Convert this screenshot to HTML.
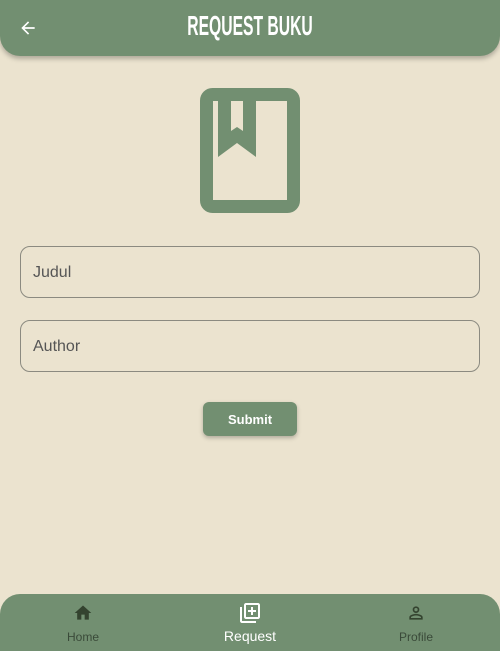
<!DOCTYPE html>
<html><head><style>
body{margin:0;width:500px;height:651px;background:#ebe3cf;font-family:"Liberation Sans",sans-serif;position:relative;overflow:hidden}
.hdr{position:absolute;left:0;top:0;width:500px;height:56px;background:#728f71;border-radius:0 0 20px 20px;box-shadow:0 3px 5px rgba(0,0,0,.25)}
.hdr .t{position:absolute;left:0;right:0;top:10px;text-align:center;color:#fff;font:bold 28px "Liberation Sans Narrow","Liberation Sans",sans-serif;transform:scaleX(.56);letter-spacing:0}
.f{position:absolute;left:20px;width:460px;height:52px;border:1px solid #8b8a80;border-radius:10px;box-sizing:border-box}
.f span{position:absolute;left:12px;top:17px;font-size:16px;color:#555}
.btn{position:absolute;left:203px;top:402px;width:94px;height:34px;background:#728f71;border-radius:6px;color:#fff;font-weight:bold;font-size:13px;text-align:center;line-height:35px;box-shadow:0 2px 4px rgba(0,0,0,.25)}
.nav{position:absolute;left:0;top:594px;width:500px;height:57px;background:#728f71;border-radius:20px 20px 0 0}
.nav div{position:absolute;font-size:12px;color:#3a4a39;text-align:center;width:100px}
</style></head><body>
<div class="hdr">
<svg style="position:absolute;left:18px;top:18px" width="20" height="20" viewBox="0 0 24 24"><path d="M20 11H7.8l5.6-5.6L12 4l-8 8 8 8 1.4-1.4L7.8 13H20z" fill="#fff"/></svg>
<div class="t">REQUEST BUKU</div></div>
<svg style="position:absolute;left:200px;top:88px" width="100" height="125" viewBox="0 0 100 125">
<rect x="6.5" y="6.5" width="87" height="112" rx="6" fill="none" stroke="#728f71" stroke-width="13"/>
<path d="M18 13h38v56L37 55 18 69z" fill="#728f71"/>
<path d="M31 13h12v30l-6-4-6 4z" fill="#ebe3cf"/>
</svg>
<div class="f" style="top:246px"><span>Judul</span></div>
<div class="f" style="top:320px"><span>Author</span></div>
<div class="btn">Submit</div>
<div class="nav">
<svg style="position:absolute;left:73px;top:9px" width="20" height="20" viewBox="0 0 24 24"><path d="M10 20v-6h4v6h5v-8h3L12 3 2 12h3v8z" fill="#34432f"/></svg>
<div style="left:33px;top:36px">Home</div>
<svg style="position:absolute;left:238px;top:7px" width="24" height="24" viewBox="0 0 24 24"><path d="M4 6H2v14c0 1.1.9 2 2 2h14v-2H4zm16-4H8c-1.1 0-2 .9-2 2v12c0 1.1.9 2 2 2h12c1.1 0 2-.9 2-2V4c0-1.1-.9-2-2-2zm0 14H8V4h12zm-7-2h2v-3h3V9h-3V6h-2v3h-3v2h3z" fill="#fff"/></svg>
<div style="left:200px;top:34px;color:#fff;font-size:14px">Request</div>
<svg style="position:absolute;left:406px;top:9px" width="20" height="20" viewBox="0 0 24 24"><path d="M12 6a2 2 0 110 4 2 2 0 010-4m0 9c2.7 0 5.8 1.3 6 2v1H6v-1c.2-.7 3.3-2 6-2m0-11a4 4 0 100 8 4 4 0 000-8zm0 9c-2.7 0-8 1.3-8 4v3h16v-3c0-2.7-5.3-4-8-4z" fill="#34432f"/></svg>
<div style="left:366px;top:36px">Profile</div>
</div>
</body></html>
